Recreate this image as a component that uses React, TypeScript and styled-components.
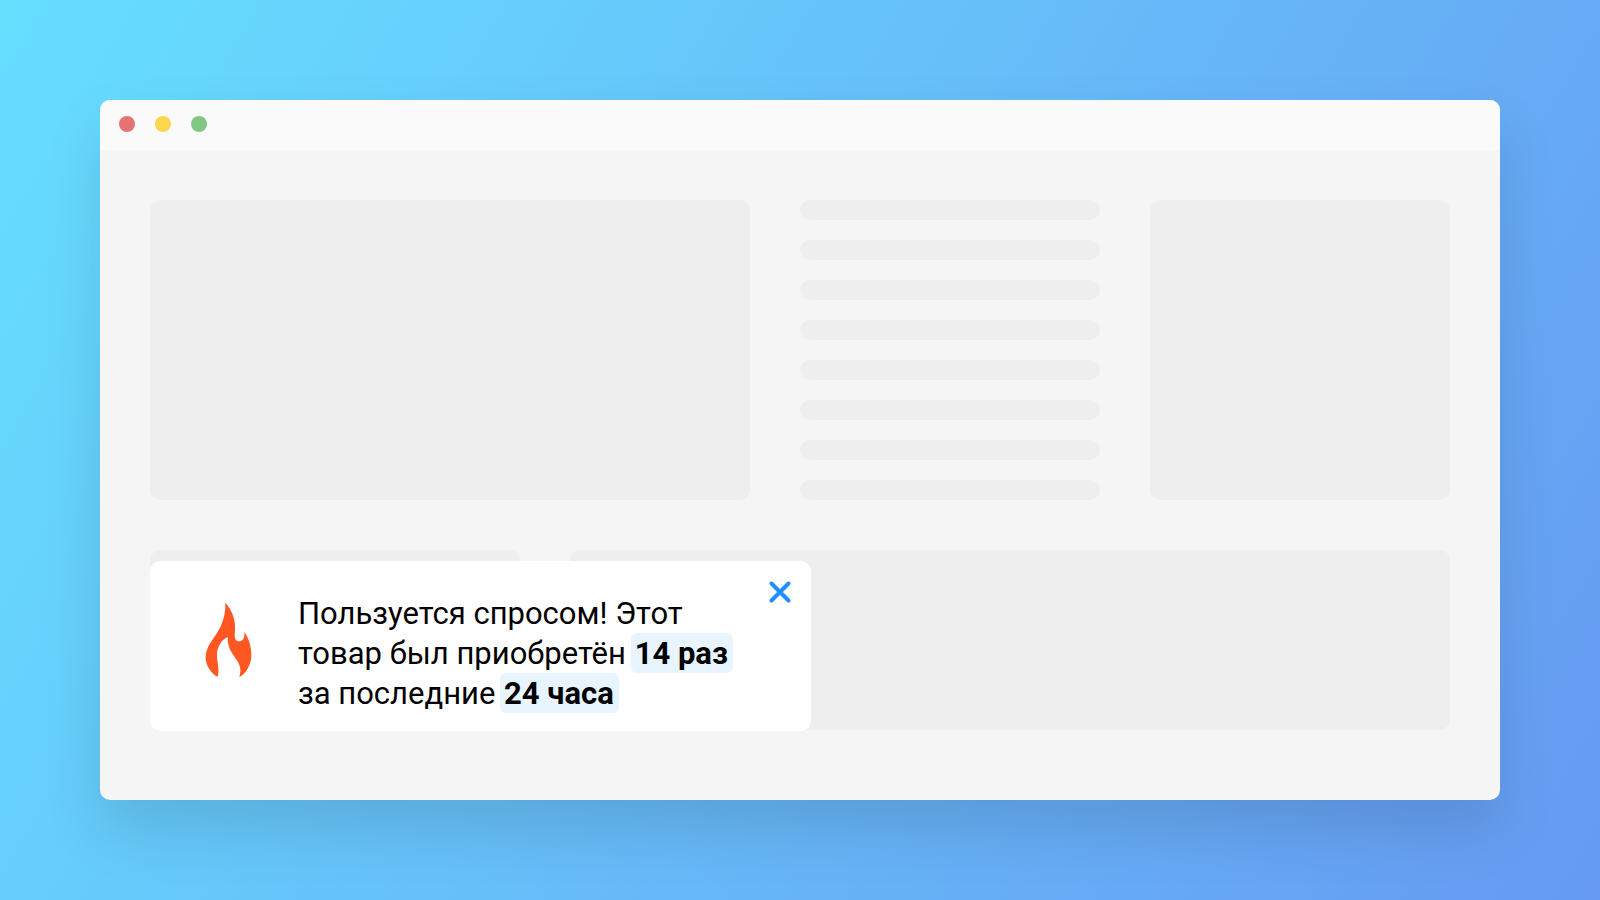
import React from "react";
import styled, { createGlobalStyle } from "styled-components";

const GlobalStyle = createGlobalStyle`
  *, *::before, *::after { box-sizing: border-box; }
  body { margin: 0; font-family: Roboto, "Liberation Sans", sans-serif; }
`;

const Page = styled.main`
  min-height: 100vh;
  padding: 100px;
  display: flex;
  flex-direction: column;
  background: linear-gradient(120deg, #66dfff 0%, #669af2 100%);
`;

const BrowserWindow = styled.section`
  position: relative;
  flex: 1;
  display: flex;
  flex-direction: column;
  border-radius: 10px;
  background: #f5f5f5;
  box-shadow: 0 30px 60px rgba(0, 0, 0, 0.12);
`;

const TitleBar = styled.header`
  display: flex;
  align-items: center;
  gap: 20px;
  height: 50px;
  padding: 0 19px 2px;
  border-radius: 10px 10px 0 0;
  background: #fafafa;
`;

const Dot = styled.span<{ $color: string }>`
  width: 16px;
  height: 16px;
  border-radius: 50%;
  background: ${(p) => p.$color};
`;

const Content = styled.div`
  display: flex;
  flex-direction: column;
  gap: 50px;
  padding: 50px;
`;

const Row = styled.div<{ $columns: string; $height: number }>`
  display: grid;
  grid-template-columns: ${(p) => p.$columns};
  gap: 50px;
  min-height: ${(p) => p.$height}px;
`;

const Block = styled.div`
  border-radius: 10px;
  background: #eeeeee;
`;

const Lines = styled.div`
  display: flex;
  flex-direction: column;
  gap: 20px;
`;

const Line = styled.div`
  height: 20px;
  border-radius: 10px;
  background: #eeeeee;
`;

const Notice = styled.aside`
  position: absolute;
  left: 50px;
  bottom: 69px;
  display: flex;
  width: 661px;
  padding: 20px 20px 17px;
  border-radius: 10px;
  background: #ffffff;
`;

const IconSlot = styled.div`
  display: flex;
  align-items: center;
  justify-content: center;
  width: 116px;
  padding-bottom: 15px;
`;

const Message = styled.p`
  flex: 1;
  margin: 0;
  padding: 13px 0 0 12px;
  color: #000000;
  font-size: 31px;
  line-height: 40px;
`;

const Highlight = styled.strong`
  margin-left: -3px;
  padding: 2px 5px 1px 4px;
  border-radius: 6px;
  background: #e8f4ff;
  font-weight: 700;
`;

const CloseButton = styled.button`
  display: flex;
  align-self: flex-start;
  padding: 0;
  border: 0;
  background: none;
  color: #1e90ff;
  cursor: pointer;
`;

const Flame = () => (
  <svg width="47" height="76" viewBox="45 36 141 228" fill="#ff5722" aria-hidden="true">
    <path d="M106 38C124 58 138 88 135 120C132 145 136 154 147 154C158 154 165 145 163 126C177 145 184 172 184 195C184 228 165 253 148 261C155 235 150 224 136 204C120 181 113 170 113 141C95 150 82 168 81 192C80 215 90 235 83 261C64 251 47 228 47 202C47 170 70 148 85 122C99 98 107 72 106 38Z" />
  </svg>
);

const Cross = () => (
  <svg width="22" height="22" viewBox="0 0 22 22" stroke="currentColor" strokeWidth="4" strokeLinecap="round" aria-hidden="true">
    <path d="M2.5 2.5L19.5 19.5M19.5 2.5L2.5 19.5" />
  </svg>
);

const lineKeys = Array.from({ length: 8 }, (_, i) => i);

export default function App() {
  return (
    <>
      <GlobalStyle />
      <Page>
        <BrowserWindow>
          <TitleBar>
            <Dot $color="#e57373" />
            <Dot $color="#ffd54f" />
            <Dot $color="#81c784" />
          </TitleBar>
          <Content>
            <Row $columns="2fr 1fr 1fr" $height={300}>
              <Block />
              <Lines>
                {lineKeys.map((key) => (
                  <Line key={key} />
                ))}
              </Lines>
              <Block />
            </Row>
            <Row $columns="37fr 88fr" $height={180}>
              <Block />
              <Block />
            </Row>
          </Content>
          <Notice>
            <IconSlot>
              <Flame />
            </IconSlot>
            <Message>
              Пользуется спросом! Этот
              <br />
              товар был приобретён <Highlight>14 раз</Highlight>
              <br />
              за последние <Highlight>24 часа</Highlight>
            </Message>
            <CloseButton type="button" aria-label="Закрыть">
              <Cross />
            </CloseButton>
          </Notice>
        </BrowserWindow>
      </Page>
    </>
  );
}
